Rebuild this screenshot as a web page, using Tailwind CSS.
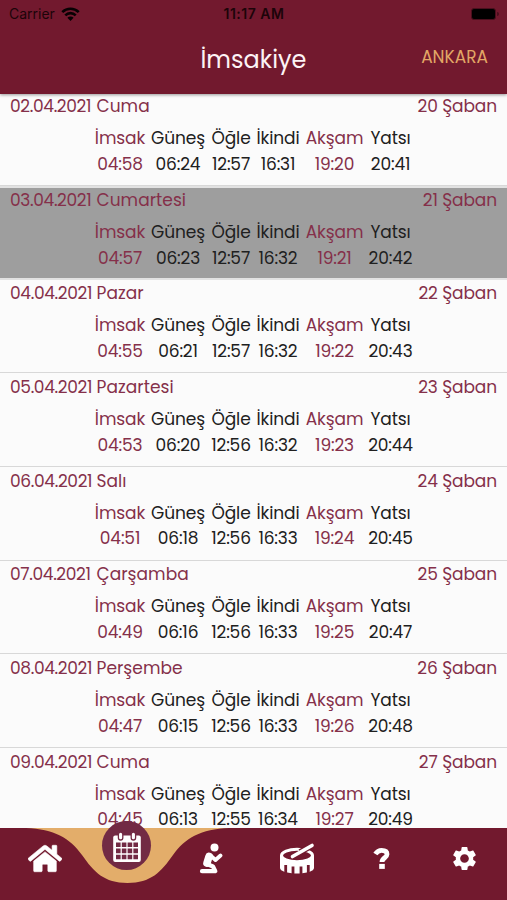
<!DOCTYPE html>
<html lang="tr">
<head>
    <meta charset="UTF-8">
    <meta name="viewport" content="width=device-width, initial-scale=1.0">
    <title>İmsakiye</title>
    <script src="https://cdn.jsdelivr.net/npm/@tailwindcss/browser@4"></script>
</head>
<body class="bg-[#fbfbfb] font-[Poppins,Inter,sans-serif]">
    <div class="w-[507px] h-[900px] flex flex-col overflow-hidden">
        <header class="relative z-10 h-[94px] shrink-0 bg-[#72192e] shadow-[0_1px_3px_rgba(0,0,0,0.4)]">
            <div class="h-7 grid grid-cols-3 items-center pl-[9px] pr-2 text-[14px] leading-none font-[Inter,sans-serif] text-[#1c0409]">
                <div class="flex items-center gap-[6px]">
                    <span>Carrier</span>
                    <svg class="w-[19px] h-[14px]" viewBox="0 0 19 14" fill="none" stroke="#080103" stroke-width="2.6">
                        <path d="M1.3 5.2a11.6 11.6 0 0 1 16.4 0M4.3 8.3a7.4 7.4 0 0 1 10.4 0"/>
                        <path d="M9.5 14 6.4 10.8a4.4 4.4 0 0 1 6.2 0z" fill="#080103" stroke="none"/>
                    </svg>
                </div>
                <span class="text-center font-semibold whitespace-nowrap tracking-[0.5px]">11:17 AM</span>
                <div class="flex justify-end items-center gap-px">
                    <div class="w-[25px] h-[12px] rounded-[3px] bg-black border border-[#4a0f1d]"></div>
                    <div class="w-[2px] h-1 rounded-r bg-[#4a0f1d]"></div>
                </div>
            </div>
            <div class="h-[62px] grid grid-cols-[1fr_auto_1fr] items-center pr-[19px]">
                <span></span>
                <h1 class="ml-[19px] pt-[2px] text-[24px] leading-none text-[#fdf3f5]">İmsakiye</h1>
                <span class="justify-self-end text-[17px] leading-none pb-[3px] text-[#e2a766]">ANKARA</span>
            </div>
        </header>

        <main id="days" class="flex-1 min-h-0 overflow-hidden -mt-[1.5px]"></main>

        <nav class="relative h-[72px] shrink-0 bg-[#72192e]">
            <svg class="absolute left-0 top-0 w-[254px] h-[72px]" viewBox="0 0 254 72" fill="#e3ad6a">
                <path d="M26 0C54 1 70 10 82 27C94 44 104 55 127.5 55C151 55 161 44 173 27C185 10 201 1 229 0z"/>
            </svg>
            <div class="relative h-full grid grid-cols-6">
                <a class="flex justify-center pt-[15px] pl-[5px]">
                    <svg class="w-[34px] h-[31px]" viewBox="0 0 576 512" fill="#fff" stroke="#fff" stroke-width="10"><path d="M280.37 148.26L96 300.11V464a16 16 0 0 0 16 16l112.06-.29a16 16 0 0 0 15.92-16V368a16 16 0 0 1 16-16h64a16 16 0 0 1 16 16v95.64a16 16 0 0 0 16 16.05L464 480a16 16 0 0 0 16-16V300L295.67 148.26a12.19 12.19 0 0 0-15.3 0zM571.6 251.47L488 182.56V44.05a12 12 0 0 0-12-12h-56a12 12 0 0 0-12 12v72.61L318.47 43a48 48 0 0 0-61 0L4.34 251.47a12 12 0 0 0-1.6 16.9l25.5 31A12 12 0 0 0 45.15 301l235.22-193.74a12.19 12.19 0 0 1 15.3 0L530.9 301a12 12 0 0 0 16.9-1.6l25.5-31a12 12 0 0 0-1.7-16.93z"/></svg>
                </a>
                <a class="flex justify-center">
                    <span class="w-[49px] h-[49px] -mt-[7px] rounded-full bg-[#722a44] flex items-center justify-center">
                        <svg class="mt-[2px] w-[30px] h-[32px]" viewBox="0 0 30 32">
                            <rect x="1.2" y="4.5" width="27.6" height="26.5" rx="2" fill="#fff"/>
                            <rect x="6.4" y="1" width="4.4" height="8" rx="2.2" fill="#fff" stroke="#722a44" stroke-width="1.3"/>
                            <rect x="19.2" y="1" width="4.4" height="8" rx="2.2" fill="#fff" stroke="#722a44" stroke-width="1.3"/>
                            <path fill="#722a44" d="M4 11.5h4.6v4.6H4zm5.8 0h4.6v4.6H9.8zm5.8 0h4.6v4.6h-4.6zm5.8 0H26v4.6h-4.6zM4 17.6h4.6v4.6H4zm5.8 0h4.6v4.6H9.8zm5.8 0h4.6v4.6h-4.6zm5.8 0H26v4.6h-4.6zM4 23.7h4.6v4.6H4zm5.8 0h4.6v4.6H9.8zm5.8 0h4.6v4.6h-4.6zm5.8 0H26v4.6h-4.6z"/>
                        </svg>
                    </span>
                </a>
                <a class="flex justify-center pt-[15px]">
                    <svg class="w-[24px] h-[32px]" viewBox="0 0 24 32" fill="none" stroke="#fff" stroke-linecap="round" stroke-linejoin="round">
                        <circle cx="15.5" cy="4.6" r="4" fill="#fff" stroke="none"/>
                        <path d="M10 13.5L8 20" stroke-width="7.6"/>
                        <path d="M11.5 12.5L16.5 17L21.5 12.5" stroke-width="3.8"/>
                        <path d="M8 21L14 23.5L16.3 28.2H3" stroke-width="4.2"/>
                    </svg>
                </a>
                <a class="flex justify-center pt-[15px] pl-[3px]">
                    <svg class="w-[36px] h-[32px]" viewBox="0 0 36 32" fill="none" stroke="#fff">
                        <path d="M1 12.5V25c0 3 7 5.5 17 5.5S35 28 35 25V12.5z" fill="#fff" stroke="none"/>
                        <ellipse cx="18" cy="12.5" rx="15.5" ry="6.2" fill="#72192e" stroke-width="3"/>
                        <path d="M6.7 22v9M14 23.5v9M22 23.5v9M29.3 22v9" stroke="#72192e" stroke-width="2.8"/>
                        <path d="M21 9.2L31 3.6" stroke="#72192e" stroke-width="6"/>
                        <path d="M13.5 13.5L33 2.5" stroke-width="3.6" stroke-linecap="round"/>
                    </svg>
                </a>
                <a class="flex justify-center pt-[19px] pl-[3px]">
                    <svg class="w-[18px] h-[24px]" viewBox="0 0 18 24" fill="none" stroke="#fff" stroke-width="4.8">
                        <path d="M2.4 7C4 4.5 5.800 3.300 8.600 3.300C12 3.300 14 4.800 14 7.300C14 10.800 9 10.800 9 15"/>
                        <path d="M6.200 19.400h5.600" stroke-width="5"/>
                    </svg>
                </a>
                <a class="flex justify-center pt-[16px]">
                    <svg class="w-[29px] h-[29px]" viewBox="0 0 24 24" fill="#fff"><path d="M19.14 12.94c.04-.3.06-.61.06-.94 0-.32-.02-.64-.07-.94l2.03-1.58c.18-.14.23-.41.12-.61l-1.92-3.32c-.12-.22-.37-.29-.59-.22l-2.39.96c-.5-.38-1.03-.7-1.62-.94l-.36-2.54c-.04-.24-.24-.41-.48-.41h-3.84c-.24 0-.43.17-.47.41l-.36 2.54c-.59.24-1.13.57-1.62.94l-2.39-.96c-.22-.08-.47 0-.59.22L2.74 8.87c-.12.21-.08.47.12.61l2.03 1.58c-.05.3-.09.63-.09.94s.02.64.07.94l-2.03 1.58c-.18.14-.23.41-.12.61l1.92 3.32c.12.22.37.29.59.22l2.39-.96c.5.38 1.03.7 1.62.94l.36 2.54c.05.24.24.41.48.41h3.84c.24 0 .44-.17.47-.41l.36-2.54c.59-.24 1.13-.56 1.62-.94l2.39.96c.22.08.47 0 .59-.22l1.92-3.32c.12-.22.07-.47-.12-.61l-2.01-1.58zM12 15.6c-1.98 0-3.6-1.62-3.6-3.6s1.62-3.6 3.6-3.6 3.6 1.62 3.6 3.6-1.62 3.6-3.6 3.6z"/></svg>
                </a>
            </div>
        </nav>
    </div>

    <script>
        const names = ['İmsak', 'Güneş', 'Öğle', 'İkindi', 'Akşam', 'Yatsı'];
        const days = [
            { date: '02.04.2021', day: 'Cuma', hijri: '20 Şaban', times: ['04:58', '06:24', '12:57', '16:31', '19:20', '20:41'] },
            { date: '03.04.2021', day: 'Cumartesi', hijri: '21 Şaban', times: ['04:57', '06:23', '12:57', '16:32', '19:21', '20:42'], today: true },
            { date: '04.04.2021', day: 'Pazar', hijri: '22 Şaban', times: ['04:55', '06:21', '12:57', '16:32', '19:22', '20:43'] },
            { date: '05.04.2021', day: 'Pazartesi', hijri: '23 Şaban', times: ['04:53', '06:20', '12:56', '16:32', '19:23', '20:44'] },
            { date: '06.04.2021', day: 'Salı', hijri: '24 Şaban', times: ['04:51', '06:18', '12:56', '16:33', '19:24', '20:45'] },
            { date: '07.04.2021', day: 'Çarşamba', hijri: '25 Şaban', times: ['04:49', '06:16', '12:56', '16:33', '19:25', '20:47'] },
            { date: '08.04.2021', day: 'Perşembe', hijri: '26 Şaban', times: ['04:47', '06:15', '12:56', '16:33', '19:26', '20:48'] },
            { date: '09.04.2021', day: 'Cuma', hijri: '27 Şaban', times: ['04:45', '06:13', '12:55', '16:34', '19:27', '20:49'] }
        ];

        // İmsak and Akşam are the fasting times, shown in the accent colour
        const color = i => i === 0 || i === 4 ? 'text-[#85304a]' : 'text-[#202020]';

        document.getElementById('days').innerHTML = days.map(d => `
            <section class="h-[93.65px] ${d.today ? 'bg-[#9e9e9e] border-y-2 border-[#e2e2e2]' : 'pt-[1.7px] border-b border-[#d8d8d8]'}">
                <div class="flex justify-between px-[10px] text-[17px] leading-[25px] text-[#85304a]">
                    <span class="flex gap-1"><span class="w-[82.5px] tracking-[-0.35px] whitespace-nowrap">${d.date}</span><span class="tracking-[0.05px]">${d.day}</span></span>
                    <span class="tracking-[-0.1px]">${d.hijri}</span>
                </div>
                <div class="mt-[7px] ml-[91px] grid grid-cols-[58px_58px_48px_46px_67px_45px] text-center text-[17px] leading-[25.5px] whitespace-nowrap">
                    ${names.map((n, i) => `<span class="${color(i)} tracking-[-0.1px]">${n}</span>`).join('')}
                    ${d.times.map((t, i) => `<span class="${color(i)} tracking-[-0.15px]">${t}</span>`).join('')}
                </div>
            </section>
        `).join('');
    </script>
</body>
</html>
